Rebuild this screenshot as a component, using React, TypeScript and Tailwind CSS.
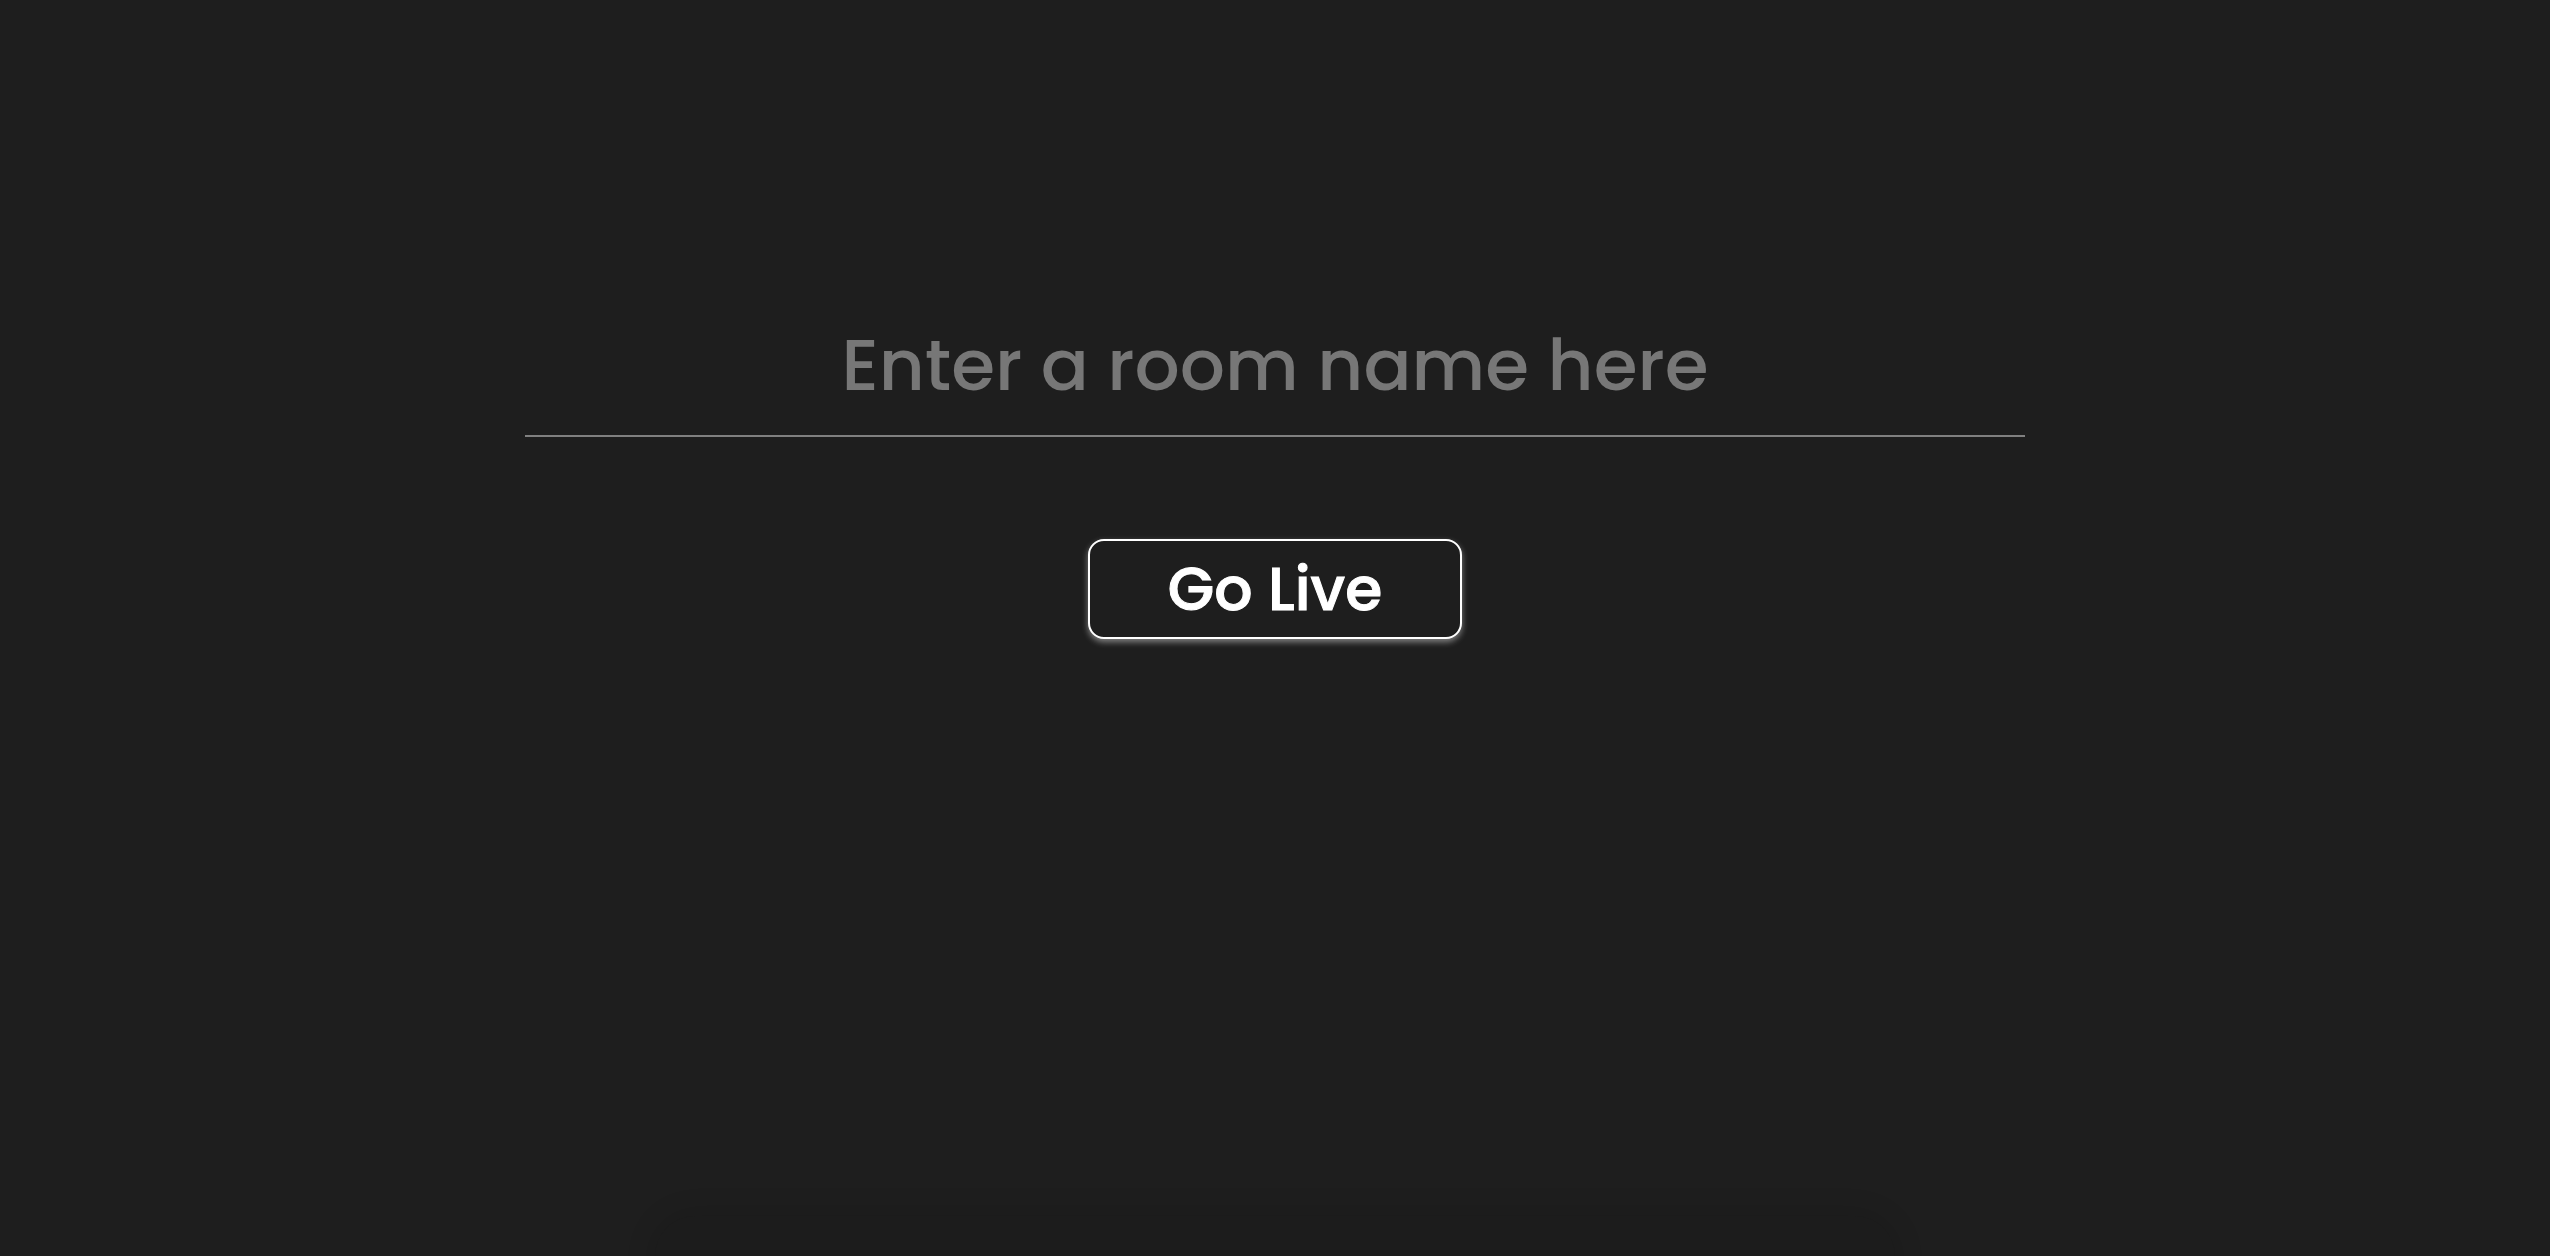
export default function App() {
  return (
    <div
      className="relative flex min-h-screen w-full flex-col items-center overflow-hidden bg-[#1e1e1e]"
      style={{ fontFamily: "Poppins, Inter, 'Noto Sans', sans-serif" }}
    >
      <div className="mt-[301px] w-[1500px] border-b-2 border-[#808080]">
        <input
          type="text"
          placeholder="Enter a room name here"
          className="h-[134px] w-full bg-transparent pb-[6px] text-center text-[71px] font-medium text-white outline-none placeholder:text-[#777777]"
        />
      </div>
      <button className="mt-[102px] flex h-[100px] w-[374px] items-center justify-center rounded-[16px] border-2 border-white bg-[#1e1e1e] text-[60px] font-medium text-white shadow-[0_3px_6px_rgba(255,255,255,0.45)] [-webkit-text-stroke:1px_white]">
        Go Live
      </button>
      <div className="absolute bottom-[-60px] left-1/2 h-[100px] w-[1240px] -translate-x-1/2 rounded-[40px] bg-[#1c1c1c] shadow-[0_0_30px_rgba(0,0,0,0.15)]" />
    </div>
  );
}
